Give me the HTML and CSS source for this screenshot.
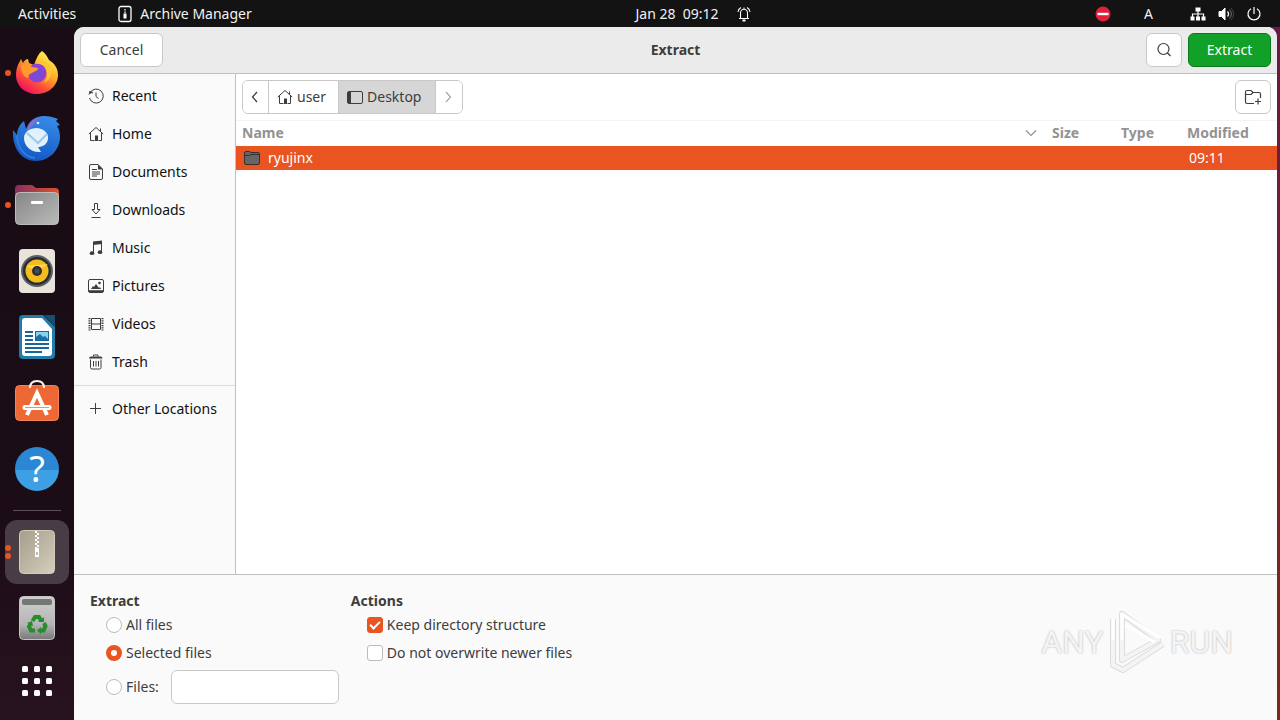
FILE: index.html
```html
<!DOCTYPE html>
<html lang="en">
<head>
  <meta charset="UTF-8">
  <title>Extract</title>
  <link rel="stylesheet" href="styles.css">
</head>
<body>
  <!-- Top bar -->
  <header class="topbar">
    <div class="topbar-left">
      <button class="bar-btn">Activities</button>
      <button class="bar-btn">
        <svg width="14" height="18" viewBox="0 0 14 18" fill="none" stroke="#fff"><rect x="1" y="1.5" width="12" height="15" rx="2" stroke-width="1.3"/><path d="M7 4v1.5M7 6.500v1.5" stroke-width="1.300"/><rect x="6" y="9" width="2" height="4" fill="#fff"/></svg>
        Archive Manager
      </button>
    </div>
    <button class="bar-btn clock">
      <span>Jan 28&nbsp; 09:12</span>
      <svg width="14" height="18" viewBox="0 0 14 18" fill="none" stroke="#fff" stroke-width="1.1"><path d="M2 13.500h10M3.500 13.500V8a3.500 3.700 0 0 1 7 0v5.500M1 7a5.500 5.500 0 0 1 3-4.500M13 7a5.500 5.500 0 0 0-3-4.500M7 4V2.500"/><path d="M5.500 15.500h3" stroke-width="2"/></svg>
    </button>
    <div class="topbar-right">
      <svg class="busy" width="16" height="16" viewBox="0 0 16 16"><circle cx="8" cy="8" r="7.500" fill="#e0203a"/><rect x="2.500" y="6.800" width="11" height="2.400" fill="#fff"/></svg>
      <button class="bar-btn layout">A</button>
      <button class="bar-btn status" aria-label="System">
        <svg width="16" height="16" viewBox="0 0 16 16" fill="#fff"><path d="M5.500 1.500h5v4h-5zM0.500 10.500h4v4h-4zM6 10.500h4v4H6zM11.500 10.500h4v4h-4z"/><path d="M8 5v6M2.500 11V8h11v3" fill="none" stroke="#fff" stroke-width="1.200"/></svg>
        <svg width="16" height="16" viewBox="0 0 16 16" fill="none" stroke="#fff"><path d="M1 5.500h2.500L7 2v12l-3.500-3.500H1z" fill="#fff"/><path d="M9.500 5.500a3.500 3.500 0 0 1 0 5" stroke-width="1.300"/><path d="M11.500 3.500a6.500 6.500 0 0 1 0 9" stroke="#777"/><path d="M13 1.800a9 9 0 0 1 0 12.400" stroke="#444"/></svg>
        <svg width="16" height="16" viewBox="0 0 16 16" fill="none" stroke="#fff" stroke-width="1.200"><path d="M5 2.700a6 6 0 1 0 6 0M8 1v7"/></svg>
      </button>
    </div>
  </header>

  <div class="desktop">
    <!-- Dock -->
    <nav class="dock">
      <button class="dock-item" aria-label="Firefox">
        <i class="dot"></i>
        <svg width="46" height="46" viewBox="0 0 46 46">
          <defs>
            <linearGradient id="ff" x1=".8" y1=".1" x2=".25" y2=".95"><stop offset="0" stop-color="#fff04a"/><stop offset=".4" stop-color="#ffa62b"/><stop offset=".7" stop-color="#ff5137"/><stop offset="1" stop-color="#ed1360"/></linearGradient>
            <radialGradient id="ffp"><stop offset="0" stop-color="#6a51d8"/><stop offset="1" stop-color="#9241d3"/></radialGradient>
          </defs>
          <path d="M28 1c3 2 5 5 7 9l4 3c3 3 5 7 5 12 0 10-9 19-21 19S2 36 2 25c0-5 1-9 4-14l1-2 2 4c1-2 3-4 5-4l1 4 5 2c2-6 4-11 8-14z" fill="url(#ff)"/>
          <circle cx="23" cy="23" r="9.500" fill="url(#ffp)"/>
          <path d="M8 15c4-1 8 0 10 2l6 1c0 3-3 3-6 5-3 1-4 2-3 4 0 2-8 1-8-12z" fill="#ff9a2b"/>
          <path d="M22 14c6-1 10 2 11 8 1 5-1 9-4 11 7-2 10-10 8-16-2-5-10-7-15-3z" fill="#ffc533"/>
        </svg>
      </button>
      <button class="dock-item" aria-label="Thunderbird">
        <svg width="50" height="48" viewBox="0 0 50 48">
          <defs><linearGradient id="tb" x1=".7" y1="0" x2=".4" y2="1"><stop offset="0" stop-color="#388be9"/><stop offset="1" stop-color="#1157c4"/></linearGradient></defs>
          <path d="M1 15l4 5c0-6 3-11 7-14l2 8c3-8 9-13 18-13 5 0 9 1 14 3l-2 2 4 4-3 1c2 3 3 7 3 11 0 13-11 24-24 24C10 46 0 34 1 15z" fill="url(#tb)"/>
          <path d="M15 15c2-8 7-12 13-12-4 2-5 6-8 8l-5 6z" fill="#8b6bd3"/>
          <path d="M12 23c0-6 6-10 13-10 7 1 12 5 11 11-1 6-6 8-10 8l3 5c-10 1-17-6-17-14z" fill="#e2f2fc"/>
          <path d="M15 18l11 10 9-9" fill="none" stroke="#9cc6ea" stroke-width="2"/>
          <path d="M5 20c0 12 7 22 18 23" fill="none" stroke="#2f7cdb" stroke-width="2"/>
          <circle cx="26" cy="8" r="1.300" fill="#d9efff"/>
        </svg>
      </button>
      <button class="dock-item" aria-label="Files">
        <i class="dot"></i>
        <svg width="46" height="42" viewBox="0 0 46 42">
          <defs><linearGradient id="fb"><stop offset="0" stop-color="#85305f"/><stop offset="1" stop-color="#e0512c"/></linearGradient><linearGradient id="fg" x2="1" y2="1"><stop offset="0" stop-color="#858585"/><stop offset="1" stop-color="#bbb"/></linearGradient></defs>
          <path d="M1 5q0-4 4-4h13l4 3h19q4 0 4 4v10H1z" fill="url(#fb)"/>
          <rect x="1.500" y="8.500" width="43" height="32" rx="4" fill="url(#fg)" stroke="#bdbdbd"/>
          <rect x="17" y="17" width="12" height="3" rx="1" fill="#fff"/>
        </svg>
      </button>
      <button class="dock-item" aria-label="Rhythmbox">
        <svg width="38" height="46" viewBox="0 0 38 46"><rect x="1" y="1" width="36" height="44" rx="4" fill="#e8e4dc"/><circle cx="19" cy="23" r="16" fill="#5c6068"/><circle cx="19" cy="23" r="14" fill="#292d33"/><circle cx="19" cy="23" r="11.500" fill="#f4bd1c"/><path d="M8 18l22-2-11 7z" fill="#ffd75c"/><circle cx="19" cy="23" r="5" fill="#2c2e32"/><circle cx="19" cy="23" r="2.500" fill="#484b50"/></svg>
      </button>
      <button class="dock-item" aria-label="LibreOffice Writer">
        <svg width="38" height="46" viewBox="0 0 38 46"><path d="M5 1h20l12 12v28q0 4-4 4H5q-4 0-4-4V5q0-4 4-4z" fill="#217ca8"/><path d="M7 4h17l10 11v24q0 3-3 3H7q-3 0-3-3V7q0-3 3-3z" fill="#fff"/><path d="M26 1h11v12z" fill="#174d71"/><path d="M7 18h8M7 22h8M7 26h8M7 30h24M7 34h24M7 38h17" stroke="#18679c" stroke-width="2"/><rect x="17.500" y="17.500" width="13" height="9" fill="#8bd0ef" stroke="#18679c"/><path d="M18 26v-3l4-3 3 3 2-1 3 3v1z" fill="#1771aa"/></svg>
      </button>
      <button class="dock-item" aria-label="Ubuntu Software">
        <svg width="46" height="46" viewBox="0 0 46 46"><rect x="1.500" y="5.500" width="43" height="35" rx="4" fill="#ed6835" stroke="#f38358"/><path d="M16 8q0-7 7-7t7 7" fill="none" stroke="#fff3e7" stroke-width="2"/><path d="M13 35l10-22 10 22" fill="none" stroke="#fff" stroke-width="4"/><path d="M11 27.500h24" stroke="#fff" stroke-width="5" stroke-linecap="round"/><path d="M11 27.500h24" stroke="#df9877" stroke-width="1"/></svg>
      </button>
      <button class="dock-item" aria-label="Help">
        <span class="help">?</span>
      </button>
      <hr class="dock-line">
      <button class="dock-item active" aria-label="Archive Manager">
        <i class="dot two"></i>
        <svg width="38" height="46" viewBox="0 0 38 46"><defs><linearGradient id="ar" x2="1" y2="1"><stop offset="0" stop-color="#a69d8c"/><stop offset="1" stop-color="#d5cebd"/></linearGradient></defs><rect x="1.500" y="1.500" width="35" height="43" rx="4" fill="url(#ar)" stroke="#d4ccbb"/><path d="M18 2v18" stroke="#fff" stroke-width="2" stroke-dasharray="2 2"/><path d="M20 4v17" stroke="#fff" stroke-width="2" stroke-dasharray="2 2"/><path d="M17 19h4v9h-4z" fill="#fff"/><path d="M18.500 23h1v3h-1z" fill="#81786a"/></svg>
      </button>
      <button class="dock-item" aria-label="Trash">
        <svg width="38" height="46" viewBox="0 0 38 46"><defs><linearGradient id="tr" x2="0" y2="1"><stop offset="0" stop-color="#cfcfcf"/><stop offset=".65" stop-color="#b5b5b5"/><stop offset="1" stop-color="#777"/></linearGradient></defs><rect x="1.500" y="1.500" width="35" height="43" rx="4" fill="url(#tr)" stroke="#c4c4c4"/><rect x="4" y="4" width="30" height="6" rx="2" fill="#747774"/><g fill="none" stroke="#268c2c" stroke-width="4"><path d="M14.500 26l2.500-4h4l2 3.500M26 28l1.500 3-2 4.500H22M17 35.500h-4l-2-4 1.500-2.500"/></g><path d="M20 27h6v-5zM23 32v7l-4-3.500zM9 28l5-2 1 5z" fill="#268c2c"/></svg>
      </button>
      <button class="dock-item apps" aria-label="Show Applications">
        <svg width="30" height="30" viewBox="0 0 30 30" fill="#fff"><rect width="6" height="6" rx="1.500"/><rect x="12" width="6" height="6" rx="1.500"/><rect x="24" width="6" height="6" rx="1.500"/><rect y="12" width="6" height="6" rx="1.500"/><rect x="12" y="12" width="6" height="6" rx="1.500"/><rect x="24" y="12" width="6" height="6" rx="1.500"/><rect y="24" width="6" height="6" rx="1.500"/><rect x="12" y="24" width="6" height="6" rx="1.500"/><rect x="24" y="24" width="6" height="6" rx="1.500"/></svg>
      </button>
    </nav>

    <!-- Extract dialog -->
    <main class="window">
      <div class="titlebar">
        <button class="btn">Cancel</button>
        <h1>Extract</h1>
        <div class="actions">
          <button class="btn icon-btn" aria-label="Search">
            <svg width="16" height="16" viewBox="0 0 16 16" fill="none" stroke="#3d3d3d" stroke-width="1.200"><circle cx="7.500" cy="7" r="5.500"/><path d="M11.500 11l3 3"/></svg>
          </button>
          <button class="btn primary">Extract</button>
        </div>
      </div>

      <div class="browser">
        <nav class="places">
          <a href="#"><svg width="16" height="16" viewBox="0 0 16 16"><path d="M2.200 4.500A7 7 0 1 1 1.500 10M1 6.500l1-2.500 3 1M8 4.500v4l2.500 2"/><path d="M1 3l4 1-3 2z" fill="#3d3d3d" stroke="none"/></svg>Recent</a>
          <a href="#"><svg width="16" height="16" viewBox="0 0 16 16"><path d="M.8 8L8 1.500 15.200 8M2.500 7v7.500h4M13.500 7v7.500h-3M12.500 5V2.500"/><path d="M7 15V9.500h3V15z" fill="#3d3d3d" stroke="none"/></svg>Home</a>
          <a href="#"><svg width="16" height="16" viewBox="0 0 16 16"><path d="M3 .5h7L14.500 5v9q0 1.500-1.500 1.500H3q-1.500 0-1.500-1.500V2Q1.500.5 3 .5zM4 5.500h5M4 8h8M4 10h8M4 12h5"/><path d="M10 .5v5h5z" fill="#3d3d3d" stroke="none"/></svg>Documents</a>
          <a href="#"><svg width="16" height="16" viewBox="0 0 16 16"><path d="M6.500 1.500h3v6H12L8 12 4 7.500h2.500zM3.500 15.500h9"/></svg>Downloads</a>
          <a href="#"><svg width="16" height="16" viewBox="0 0 16 16"><path d="M5.500 13V2.500h8V12"/><path d="M5 1.500l9-1V4L5 5z" fill="#3d3d3d" stroke="none"/><ellipse cx="4" cy="13.200" rx="2.300" ry="1.900" fill="#3d3d3d" stroke="none"/><ellipse cx="12" cy="12.200" rx="2.300" ry="1.900" fill="#3d3d3d" stroke="none"/></svg>Music</a>
          <a href="#"><svg width="16" height="16" viewBox="0 0 16 16"><rect x=".5" y="1.500" width="15" height="13" rx="1.500"/><path d="M1 13.200h14" stroke-width="2"/><path d="M3 11l2-3 1 1 2-3 3 4 1-1 1 2z" fill="#3d3d3d" stroke="none"/><circle cx="11.500" cy="5" r="1.300" fill="#3d3d3d" stroke="none"/></svg>Pictures</a>
          <a href="#"><svg width="16" height="16" viewBox="0 0 16 16"><path d="M3.500 2.500h9v11h-9zM3.500 8h9"/><path d="M1.500 2v12.500M14.500 2v12.500" stroke-width="2" stroke-dasharray="1.300 1"/></svg>Videos</a>
          <a href="#"><svg width="16" height="16" viewBox="0 0 16 16"><path d="M2.500 5.500v8q0 1.500 1.500 1.500h7.500q1.500 0 1.500-1.500v-8M5.500 7v5.500M8 7v5.500M10.500 7v5.500M5.500 2.500V1h4.500v1.500"/><path d="M1 4.500q0-2 2-2h9.500q2 0 2 2z" fill="#3d3d3d" stroke="none"/></svg>Trash</a>
          <hr>
          <a href="#"><svg width="16" height="16" viewBox="0 0 16 16"><path d="M7.500 2v11M2 7.500h11"/></svg>Other Locations</a>
        </nav>

        <section class="files">
          <div class="pathrow">
            <div class="pathbar">
              <button class="step" aria-label="Back"><svg width="16" height="16" viewBox="0 0 16 16"><path d="M10 3L5.500 8l4.500 5" stroke-width="1.300"/></svg></button>
              <button><svg width="16" height="16" viewBox="0 0 16 16"><path d="M.8 8L8 1.500 15.200 8M2.500 7v7.500h4M13.500 7v7.500h-3M12.500 5V2.500"/><path d="M7 15V9.500h3V15z" fill="#3d3d3d" stroke="none"/></svg>user</button>
              <button class="current"><svg width="16" height="16" viewBox="0 0 16 16"><rect x=".5" y="2.500" width="15" height="12" rx="1.500"/><path d="M2.500 3v11" stroke-width="3"/></svg>Desktop</button>
              <button class="step" aria-label="Forward" disabled><svg width="16" height="16" viewBox="0 0 16 16"><path d="M6 3l4.500 5L6 13" stroke="#aaa" stroke-width="1.300"/></svg></button>
            </div>
            <button class="btn icon-btn" aria-label="Create Folder">
              <svg width="18" height="16" viewBox="0 0 18 16" fill="none" stroke="#3d3d3d" stroke-width="1.200"><path d="M10 14.500H3q-1.500 0-1.500-1.500V3Q1.500 1.500 3 1.500h4L9 3.500h6q1.500 0 1.500 1.500v4M1.500 5.500H7l2-2M11 12.500h6M14 9.500v6"/></svg>
            </button>
          </div>
          <table class="list">
            <thead>
              <tr>
                <th class="col-name">Name <svg width="14" height="14" viewBox="0 0 14 14" fill="none" stroke="#929292" stroke-width="1.200"><path d="M2 4.500l5 5 5-5"/></svg></th>
                <th class="col-size">Size</th>
                <th class="col-type">Type</th>
                <th class="col-mod">Modified</th>
              </tr>
            </thead>
            <tbody>
              <tr>
                <td><span class="file"><svg width="16" height="16" viewBox="0 0 16 16"><path d="M.5 3q0-1.500 1.500-1.500h3.500L7 2.500h7q1.500 0 1.500 1.500v9q0 1.500-1.500 1.500H2Q.5 14.500.5 13z" fill="#666" stroke="#3a3030"/><path d="M1 5.500h4.500L7 4.500h8" fill="none" stroke="#3a3030"/></svg>ryujinx</span></td>
                <td></td>
                <td></td>
                <td>09:11</td>
              </tr>
            </tbody>
          </table>
        </section>
      </div>

      <form class="options">
        <fieldset>
          <legend>Extract</legend>
          <label><input type="radio" name="what"> All files</label>
          <label><input type="radio" name="what" checked> Selected files</label>
          <div class="pattern">
            <label><input type="radio" name="what"> Files:</label>
            <input type="text" class="entry" aria-label="Files">
          </div>
        </fieldset>
        <fieldset>
          <legend>Actions</legend>
          <label><input type="checkbox" checked> Keep directory structure</label>
          <label><input type="checkbox"> Do not overwrite newer files</label>
        </fieldset>
      </form>

      <div class="watermark">
        <span>ANY</span>
        <svg width="58" height="64" viewBox="0 0 58 64" fill="none" stroke-linejoin="round"><path d="M14 4v46L50 30 14 4zM5 9v46l10 5 40-26" stroke="#dcdcdc" stroke-width="6"/><path d="M14 4v46L50 30 14 4zM5 9v46l10 5 40-26" stroke="#f4f4f4" stroke-width="4"/><path d="M5 30V9M14 30V4l38 24M17 15l30 17" stroke="#fff" stroke-width="3"/></svg>
        <span>RUN</span>
      </div>
    </main>
  </div>
</body>
</html>
```
FILE: styles.css
```css
*,
*::before {
  box-sizing: border-box;
}

body {
  margin: 0;
  height: 100vh;
  display: flex;
  flex-direction: column;
  overflow: hidden;
  background: #1b0c15;
  color: #3d3d3d;
  font-family: "Noto Sans", sans-serif;
  font-size: 14px;
  line-height: 20px;
}

button,
input {
  font: inherit;
  color: inherit;
}

svg {
  flex: none;
}

/* top bar */
.topbar {
  display: grid;
  grid-template-columns: 1fr auto 1fr;
  align-items: center;
  height: 27px;
  padding: 0 18px;
  background: #131313;
  color: #f2f2f2;
}

.topbar-left,
.topbar-right,
.bar-btn {
  display: flex;
  align-items: center;
}

.topbar-left {
  gap: 42px;
}

.topbar-right {
  justify-content: flex-end;
}

.bar-btn {
  gap: 8px;
  padding: 0;
  border: none;
  background: none;
}

.clock {
  gap: 18px;
  margin-left: 106px;
}

.layout {
  margin: 0 37px 0 33px;
}

.status {
  gap: 12px;
}

.desktop {
  flex: 1;
  display: flex;
  min-height: 0;
  padding-right: 3px;
  background: linear-gradient(#681a43, #7c2a18);
}

/* dock */
.dock {
  position: relative;
  z-index: 1;
  display: flex;
  flex-direction: column;
  align-items: center;
  gap: 2px;
  width: 74px;
  padding-top: 14px;
  background: linear-gradient(#190c14, #1b0c15 70%, #27131f);
}

.dock-item {
  position: relative;
  display: flex;
  align-items: center;
  justify-content: center;
  width: 64px;
  height: 64px;
  padding: 0;
  border: none;
  border-radius: 12px;
  background: none;
}

.dock-item.active {
  background: #493d45;
}

.dock-item.apps {
  height: 58px;
}

.dot {
  position: absolute;
  left: 0;
  top: 29px;
  width: 6px;
  height: 6px;
  border-radius: 50%;
  background: #e95420;
}

.dot.two {
  top: 25px;
  box-shadow: 0 8px #e95420;
}

.dock-line {
  width: 48px;
  height: 1px;
  margin: 7px 0;
  border: none;
  background: #5b5057;
}

.help {
  width: 44px;
  height: 44px;
  border-radius: 50%;
  background: linear-gradient(#2b86d4 52%, #3d9fe4 52%);
  color: #fff;
  font-size: 36px;
  line-height: 44px;
}

/* dialog */
.window {
  position: relative;
  flex: 1;
  display: flex;
  flex-direction: column;
  border-radius: 10px 10px 0 0;
  background: #fafafa;
  box-shadow: -12px 0 #190c14;
  overflow: hidden;
}

.titlebar {
  display: grid;
  grid-template-columns: 1fr auto 1fr;
  align-items: center;
  padding: 6px;
  border-bottom: 1px solid #c0c0c0;
  background: #ebebeb;
}

.titlebar h1 {
  margin: 0;
  font-size: 14px;
  line-height: 20px;
}

.actions {
  display: flex;
  justify-content: flex-end;
  gap: 6px;
}

.btn {
  justify-self: start;
  height: 34px;
  padding: 0 16px;
  border: 1px solid #c8c8c8;
  border-radius: 6px;
  background: #fff;
}

.titlebar .btn {
  min-width: 83px;
}

.titlebar .icon-btn,
.icon-btn {
  display: flex;
  align-items: center;
  justify-content: center;
  width: 36px;
  min-width: 36px;
  padding: 0;
}

.btn.primary {
  border-color: #0b7a1c;
  background: #12a128;
  color: #fff;
}

.browser {
  flex: 1;
  display: flex;
  min-height: 0;
}

.places {
  width: 162px;
  padding-top: 3px;
  border-right: 1px solid #c0c0c0;
}

.places a {
  display: flex;
  align-items: center;
  gap: 8px;
  height: 38px;
  padding-left: 14px;
  color: #111;
  text-decoration: none;
}

.places svg,
.pathbar svg {
  fill: none;
  stroke: #3d3d3d;
}

.places hr {
  height: 1px;
  margin: 4px 0;
  border: none;
  background: #dcdcdc;
}

.files {
  flex: 1;
  background: #fff;
}

.pathrow {
  display: flex;
  justify-content: space-between;
  padding: 6px;
}

.pathbar {
  display: flex;
  height: 34px;
  border: 1px solid #c8c8c8;
  border-radius: 6px;
  overflow: hidden;
}

.pathbar button {
  display: flex;
  align-items: center;
  gap: 4px;
  padding: 0 12px 0 8px;
  border: none;
  border-right: 1px solid #c8c8c8;
  background: #fff;
}

.pathbar .step {
  width: 26px;
  padding: 0 4px;
}

.pathbar .current {
  padding-right: 14px;
  background: #d6d6d6;
}

.pathbar button:last-child {
  border-right: none;
}

.list {
  width: 100%;
  border-collapse: collapse;
  table-layout: fixed;
}

.list th {
  height: 25px;
  padding: 0 6px;
  border-top: 1px solid #f3f3f3;
  color: #929292;
  text-align: left;
}

.list th svg {
  float: right;
  margin: 3px 2px 0 0;
}

.list td {
  height: 24px;
  padding: 0 8px;
  background: #e95420;
  color: #fff;
}

.col-size {
  width: 69px;
}

.col-type {
  width: 66px;
}

.col-mod {
  width: 96px;
}

.file {
  display: flex;
  align-items: center;
  gap: 8px;
}

/* extraction options */
.options {
  display: flex;
  align-items: flex-start;
  gap: 12px;
  padding: 16px;
  border-top: 1px solid #c0c0c0;
}

.options fieldset {
  display: flex;
  flex-direction: column;
  min-width: 0;
  margin: 0;
  padding: 0 0 0 16px;
  border: none;
}

.options legend {
  margin-left: -16px;
  padding: 0;
  font-weight: bold;
}

.options label {
  display: flex;
  align-items: center;
  gap: 4px;
  height: 28px;
}

.options input[type="radio"],
.options input[type="checkbox"] {
  appearance: none;
  width: 16px;
  height: 16px;
  margin: 0;
  border: 1px solid #bcbcbc;
  border-radius: 3px;
  background: #fff;
}

.options input[type="radio"] {
  border-radius: 50%;
}

.options input[type="radio"]:checked {
  border: 5px solid #e95420;
}

.options input[type="checkbox"]:checked {
  border-color: #e95420;
  background: #e95420;
}

.options input[type="checkbox"]:checked::before {
  content: "";
  display: block;
  width: 10px;
  height: 6px;
  margin: 3px 0 0 2px;
  border-left: 2px solid #fff;
  border-bottom: 2px solid #fff;
  transform: rotate(-45deg);
}

.pattern {
  display: flex;
  align-items: center;
  justify-content: space-between;
  gap: 12px;
  margin-top: 3px;
}

.entry {
  width: 168px;
  height: 34px;
  padding: 0 8px;
  border: 1px solid #c8c8c8;
  border-radius: 6px;
  background: #fff;
}

.watermark {
  position: absolute;
  right: 44px;
  bottom: 46px;
  display: flex;
  align-items: center;
  gap: 4px;
  color: #f4f4f4;
  font-family: "Roboto", "Liberation Sans", sans-serif;
  font-size: 32px;
  line-height: 44px;
  text-shadow: 0 0 2px #aaa;
}
```
